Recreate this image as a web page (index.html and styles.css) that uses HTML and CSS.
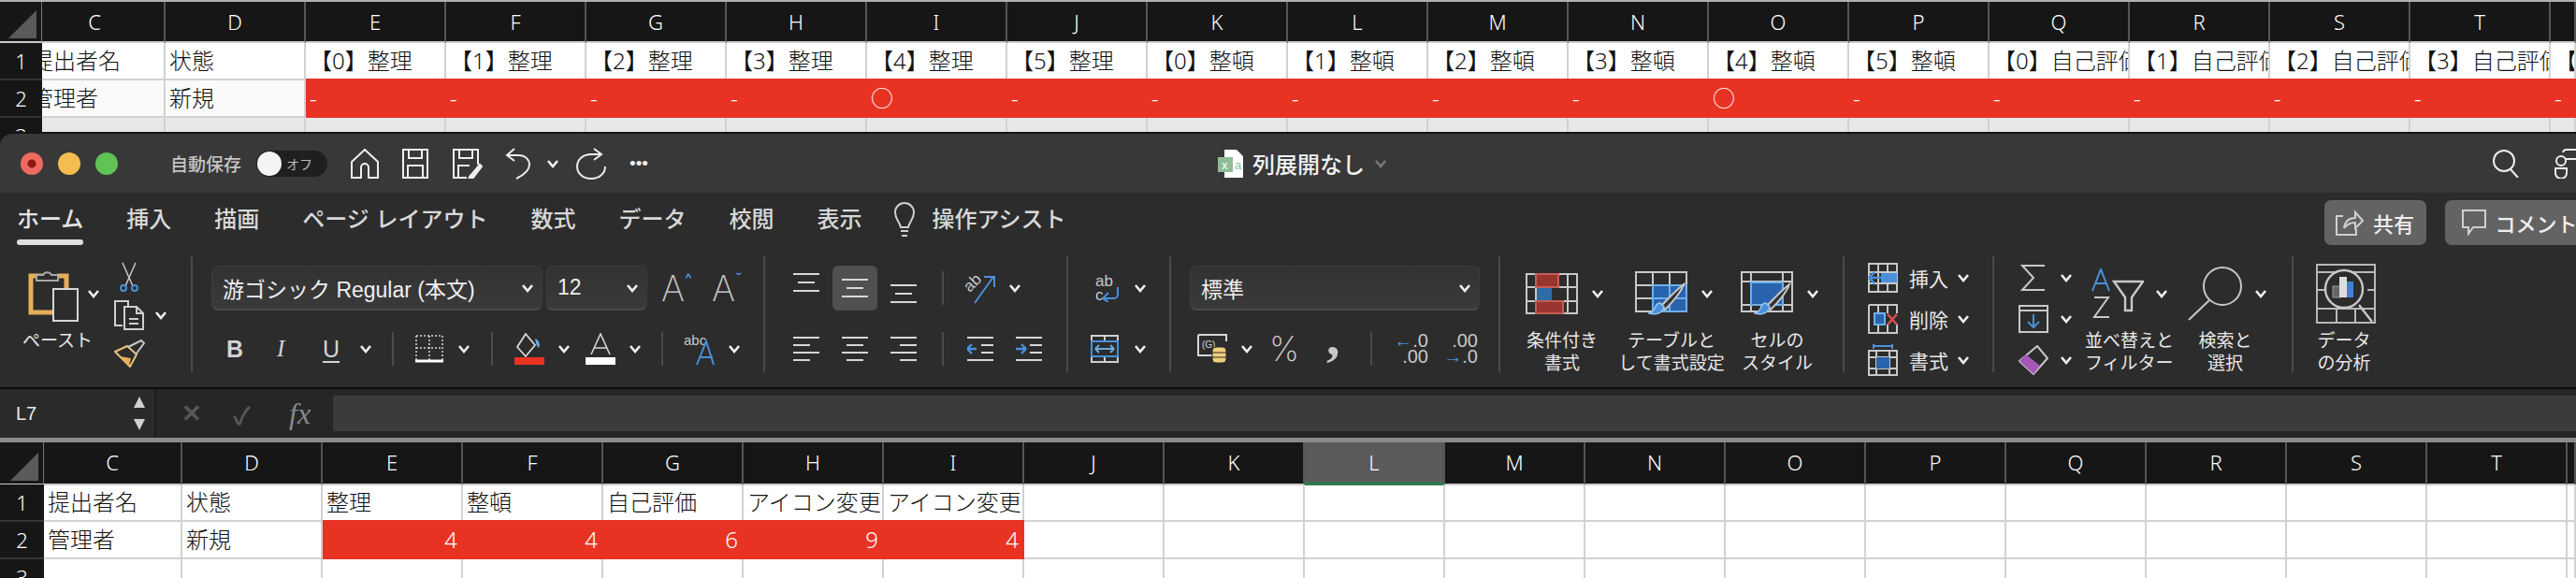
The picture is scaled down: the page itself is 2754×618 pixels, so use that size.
FILE: index.html
```html
<!DOCTYPE html>
<html lang="ja">
<head>
    <meta charset="UTF-8">
    <title>列展開なし</title>
    <link rel="stylesheet" href="styles.css">
</head>

<body>

	<svg class="sprite" width="0" height="0">
		<symbol id="chev" viewBox="0 0 14 10"><path d="M2 2l5 6 5-6" fill="none" stroke="#f0f0f0" stroke-width="2.6"/></symbol>
		<symbol id="al-top" viewBox="0 0 28 20"><path d="M0 1h28M5 10h18M0 19h28" stroke="#d6d6d6" stroke-width="2" fill="none"/></symbol>
		<symbol id="al-left" viewBox="0 0 28 26"><path d="M0 1h28M0 9h18M0 17h28M0 25h18" stroke="#d6d6d6" stroke-width="2" fill="none"/></symbol>
		<symbol id="al-center" viewBox="0 0 28 26"><path d="M0 1h28M5 9h18M0 17h28M5 25h18" stroke="#d6d6d6" stroke-width="2" fill="none"/></symbol>
		<symbol id="al-right" viewBox="0 0 28 26"><path d="M0 1h28M10 9h18M0 17h28M10 25h18" stroke="#d6d6d6" stroke-width="2" fill="none"/></symbol>
		<symbol id="brush" viewBox="0 0 40 36"><path d="M38 2C30 8 20 19 14 25l4 4C25 22 35 11 38 2z" fill="#333" stroke="#c8c8c8" stroke-width="2"/><path d="M13 22c-4 0-5 3-6 6-1 2-3 4-6 5 7 2 15 0 16-7z" fill="#4a90d9" stroke="#9cc7f0" stroke-width="1.5"/></symbol>
	</svg>

	<div class="sheet sheet-top">
		<div class="row head-row">
			<div class="corner"><span class="corner-tri"></span></div>
			<div class="col-head col-clip">C</div><div class="col-head">D</div><div class="col-head">E</div><div class="col-head">F</div><div class="col-head">G</div><div class="col-head">H</div><div class="col-head">I</div><div class="col-head">J</div><div class="col-head">K</div><div class="col-head">L</div><div class="col-head">M</div><div class="col-head">N</div><div class="col-head">O</div><div class="col-head">P</div><div class="col-head">Q</div><div class="col-head">R</div><div class="col-head">S</div><div class="col-head">T</div><div class="col-head"></div>
		</div>
		<div class="row">
			<div class="row-head">1</div>
			<div class="cell cell-clip">提出者名</div><div class="cell">状態</div>
			<div class="cell">【0】整理</div><div class="cell">【1】整理</div><div class="cell">【2】整理</div><div class="cell">【3】整理</div><div class="cell">【4】整理</div><div class="cell">【5】整理</div>
			<div class="cell">【0】整頓</div><div class="cell">【1】整頓</div><div class="cell">【2】整頓</div><div class="cell">【3】整頓</div><div class="cell">【4】整頓</div><div class="cell">【5】整頓</div>
			<div class="cell">【0】自己評価</div><div class="cell">【1】自己評価</div><div class="cell">【2】自己評価</div><div class="cell">【3】自己評価</div><div class="cell">【</div>
		</div>
		<div class="row row-soft">
			<div class="row-head">2</div>
			<div class="cell cell-clip">管理者</div><div class="cell">新規</div>
			<div class="cell red">-</div><div class="cell red">-</div><div class="cell red">-</div><div class="cell red">-</div><div class="cell red">○</div><div class="cell red">-</div>
			<div class="cell red">-</div><div class="cell red">-</div><div class="cell red">-</div><div class="cell red">-</div><div class="cell red">○</div><div class="cell red">-</div>
			<div class="cell red">-</div><div class="cell red">-</div><div class="cell red">-</div><div class="cell red">-</div><div class="cell red">-</div>
		</div>
		<div class="row row-shade">
			<div class="row-head">3</div>
			<div class="cell"></div><div class="cell"></div><div class="cell"></div><div class="cell"></div><div class="cell"></div><div class="cell"></div><div class="cell"></div><div class="cell"></div><div class="cell"></div><div class="cell"></div><div class="cell"></div><div class="cell"></div><div class="cell"></div><div class="cell"></div><div class="cell"></div><div class="cell"></div><div class="cell"></div><div class="cell"></div><div class="cell"></div>
		</div>
	</div>

	<div class="window">
		<!-- title bar -->
		<div class="titlebar">
			<div class="lights"><span class="light l-red"></span><span class="light l-yellow"></span><span class="light l-green"></span></div>
			<span class="autosave">自動保存</span>
			<div class="toggle"><span class="knob"></span><span class="toggle-text">オフ</span></div>
			<svg width="30" height="32" viewBox="0 0 30 32" class="qa"><path d="M1 14L15 1l14 13v17H19V20a4 4 0 0 0-8 0v11H1z"/></svg>
			<svg width="28" height="32" viewBox="0 0 28 32" class="qa"><path d="M1 1h26v30H1zM7 1v9h14V1M6 31V18h16v13"/></svg>
			<svg width="32" height="32" viewBox="0 0 32 32" class="qa"><path d="M15 31H1V1h26v16M7 1v9h14V1M6 30V18h12"/><path d="M18 30l11-13 2 2-10 13-4 1z" fill="#eee"/></svg>
			<svg width="28" height="34" viewBox="0 0 28 34" class="qa"><path d="M10 1L2 8l8 6M2 8h12c8 0 12 5 12 10 0 6-6 11-14 15"/></svg>
			<svg class="chev" width="14" height="10"><use href="#chev"/></svg>
			<svg width="32" height="34" viewBox="0 0 32 34" class="qa"><path d="M19 1l8 6-8 6M27 7H16C8 7 1 12 1 20s7 13 15 13 15-5 15-13"/></svg>
			<span class="dots">•••</span>
			<svg width="28" height="32" viewBox="0 0 28 32"><path d="M7 1h13l7 7v23H7z" fill="#fff"/><rect y="9" width="16" height="16" fill="#8fbc94"/><text x="4" y="22" class="doc-x">x</text><text x="18" y="22" class="doc-a">a</text></svg>
			<span class="doc-title">列展開なし</span>
			<svg class="chev chev-dim" width="14" height="10"><use href="#chev"/></svg>
			<svg width="28" height="30" viewBox="0 0 28 30" class="qa"><circle cx="12" cy="12" r="11"/><path d="M19 21l8 9"/></svg>
			<svg width="30" height="32" viewBox="0 0 30 32" class="qa"><circle cx="7" cy="13" r="5"/><path d="M1 21h12v5a6 6 0 0 1-12 0zM9 4a4 4 0 0 1 4-3h14v10H14l-2 0"/></svg>
		</div>

		<div class="ribbon">
			<div class="tabs">
				<div class="tab tab-active">ホーム</div>
				<div class="tab">挿入</div>
				<div class="tab">描画</div>
				<div class="tab">ページ レイアウト</div>
				<div class="tab">数式</div>
				<div class="tab">データ</div>
				<div class="tab">校閲</div>
				<div class="tab">表示</div>
				<div class="tab tab-assist">
					<svg width="22" height="38" viewBox="0 0 22 38" class="line-icon"><path d="M7 27C6 21 1 19 1 11a10 10 0 0 1 20 0c0 8-5 10-6 16zM7 31h8M8 36h6"/></svg>
					<span>操作アシスト</span>
				</div>
				<button class="share"><svg width="30" height="28" viewBox="0 0 30 28" class="line-icon"><path d="M8 7H1v20h21v-6M9 20c1-7 5-11 12-11V3l8 9-8 8v-6c-5 0-9 2-12 6z"/></svg>共有</button>
				<button class="share comment"><svg width="26" height="28" viewBox="0 0 26 28" class="line-icon"><path d="M1 1h24v18H12l-5 7v-7H1z"/></svg>コメント</button>
			</div>

			<div class="groups">
				<!-- clipboard -->
				<div class="group g-paste">
					<div class="big paste-big">
						<div class="big-icon">
							<svg width="54" height="60" viewBox="0 0 54 60"><path d="M22 11H3v39h23M31 11h10v14" fill="none" stroke="#e6ad5a" stroke-width="5"/><path d="M9 16v-6h7a5 5 0 0 1 9 0h7v6z" fill="#2c2c2c" stroke="#a8a8a8" stroke-width="2"/><rect x="27" y="25" width="26" height="34" fill="#2c2c2c" stroke="#d6d6d6" stroke-width="2"/></svg>
							<svg class="chev" width="14" height="10"><use href="#chev"/></svg>
						</div>
						<div class="big-label">ペースト</div>
					</div>
					<div class="clip-tools">
						<div class="clip-row"><svg class="scissors" width="20" height="32" viewBox="0 0 20 32"><path d="M3 1l11 25M17 1L6 26" stroke="#c8c8c8" stroke-width="1.5" fill="none"/><circle cx="4" cy="28" r="3" fill="none" stroke="#4a90d9" stroke-width="2"/><circle cx="16" cy="28" r="3" fill="none" stroke="#4a90d9" stroke-width="2"/></svg></div>
						<div class="clip-row">
							<svg width="32" height="32" viewBox="0 0 32 32" class="line-icon"><path d="M9 27H1V1h14v5M11 7h13l7 7v17H11zM24 7v7h7M16 20h10M16 25h10"/></svg>
							<svg class="chev" width="14" height="10"><use href="#chev"/></svg>
						</div>
						<div class="clip-row"><svg width="33" height="30" viewBox="0 0 33 30"><path d="M1 13l13-6 10 9-7 13z" fill="#2c2c2c" stroke="#e6c27a" stroke-width="2"/><path d="M6 18l12 2-2 8z" fill="#e6ad5a"/><path d="M15 8l14-7 3 3-9 12" fill="none" stroke="#c8c8c8" stroke-width="2"/></svg></div>
					</div>
				</div>

				<!-- font -->
				<div class="group g-font">
					<div class="tool-row font-top">
						<div class="combo combo-font"><span>游ゴシック Regular (本文)</span><svg class="chev" width="14" height="10"><use href="#chev"/></svg></div>
						<div class="combo combo-size"><span>12</span><svg class="chev" width="14" height="10"><use href="#chev"/></svg></div>
						<span class="big-a">A<i class="caret">^</i></span>
						<span class="big-a">A<i class="caret">ˇ</i></span>
					</div>
					<div class="tool-row font-bottom">
						<span class="fmt fmt-b">B</span>
						<span class="fmt fmt-i">I</span>
						<span class="fmt fmt-u">U</span>
						<svg class="chev" width="14" height="10"><use href="#chev"/></svg>
						<span class="vline"></span>
						<svg width="30" height="30" viewBox="0 0 30 30"><path d="M1 1h28M1 1v26M29 1v26M15 1v26M1 14h28" fill="none" stroke="#d6d6d6" stroke-width="1.5" stroke-dasharray="2 2"/><path d="M0 28h30" stroke="#fff" stroke-width="3"/></svg>
						<svg class="chev" width="14" height="10"><use href="#chev"/></svg>
						<span class="vline"></span>
						<svg width="32" height="34" viewBox="0 0 32 34"><path d="M12 1l-9 14 9 10 10-12z" fill="none" stroke="#d6d6d6" stroke-width="1.8"/><path d="M22 6c4 1 6 6 4 10-3-3-3-6-4-10z" fill="#6aa9e0"/><rect y="26" width="32" height="8" fill="#e93323"/></svg>
						<svg class="chev" width="14" height="10"><use href="#chev"/></svg>
						<svg width="32" height="34" viewBox="0 0 32 34"><path d="M6 23L16 1l10 22M9 16h14" fill="none" stroke="#d6d6d6" stroke-width="1.6"/><rect y="26" width="32" height="8" fill="#fff"/></svg>
						<svg class="chev" width="14" height="10"><use href="#chev"/></svg>
						<span class="vline"></span>
						<svg width="36" height="36" viewBox="0 0 36 36"><text x="0" y="14" class="svg-small">abc</text><path d="M14 35L24 10l8 25M18 27h13" fill="none" stroke="#4a90d9" stroke-width="2"/></svg>
						<svg class="chev" width="14" height="10"><use href="#chev"/></svg>
					</div>
				</div>

				<!-- alignment -->
				<div class="group g-align">
					<div class="tool-row align-top">
						<svg class="al-up" width="28" height="20"><use href="#al-top"/></svg>
						<div class="selected"><svg width="28" height="20"><use href="#al-top"/></svg></div>
						<svg class="al-down" width="28" height="20"><use href="#al-top"/></svg>
						<span class="vline"></span>
						<svg width="34" height="34" viewBox="0 0 34 34"><text x="0" y="16" transform="rotate(-45 10 12)" class="svg-ab">ab</text><path d="M11 33L31 5M21 5h11v11" fill="none" stroke="#4a90d9" stroke-width="2"/></svg>
						<svg class="chev" width="14" height="10"><use href="#chev"/></svg>
					</div>
					<div class="tool-row align-bottom">
						<svg width="28" height="26"><use href="#al-left"/></svg>
						<svg width="28" height="26"><use href="#al-center"/></svg>
						<svg width="28" height="26"><use href="#al-right"/></svg>
						<span class="vline"></span>
						<svg width="28" height="26" viewBox="0 0 28 26"><path d="M0 1h28M15 9h13M15 17h13M0 25h28" stroke="#d6d6d6" stroke-width="2"/><path d="M0 13h10M0 13l5-5M0 13l5 5" stroke="#4a90d9" stroke-width="2.4" fill="none"/></svg>
						<svg width="28" height="26" viewBox="0 0 28 26"><path d="M0 1h28M15 9h13M15 17h13M0 25h28" stroke="#d6d6d6" stroke-width="2"/><path d="M0 13h10M11 13l-5-5M11 13l-5 5" stroke="#4a90d9" stroke-width="2.4" fill="none"/></svg>
					</div>
				</div>

				<!-- wrap -->
				<div class="group g-wrap">
					<div class="tool-row wrap-top">
						<svg width="30" height="30" viewBox="0 0 30 30"><text x="0" y="13" class="svg-ab">ab</text><text x="0" y="28" class="svg-ab">c</text><path d="M24 14v8a4 4 0 0 1-4 4H9M14 20l-6 6 6 4" fill="none" stroke="#4a90d9" stroke-width="2"/></svg>
						<svg class="chev" width="14" height="10"><use href="#chev"/></svg>
					</div>
					<div class="tool-row wrap-bottom">
						<svg width="30" height="30" viewBox="0 0 30 30"><path d="M1 1h28v28H1zM15 1v7M15 22v7" fill="none" stroke="#cfcfcf" stroke-width="2"/><path d="M0 7h30M0 23h30M1 7v16M29 7v16" stroke="#4a90d9" stroke-width="2"/><path d="M5 15h20M5 15l4-4M5 15l4 4M25 15l-4-4M25 15l-4 4" stroke="#6aa9e0" stroke-width="2" fill="none"/></svg>
						<svg class="chev" width="14" height="10"><use href="#chev"/></svg>
					</div>
				</div>

				<!-- number -->
				<div class="group g-number">
					<div class="tool-row number-top">
						<div class="combo combo-format"><span>標準</span><svg class="chev" width="14" height="10"><use href="#chev"/></svg></div>
					</div>
					<div class="tool-row number-bottom">
						<svg width="32" height="32" viewBox="0 0 32 32"><path d="M1 1h30v7M1 1v22h15" fill="none" stroke="#d6d6d6" stroke-width="2"/><text x="5" y="15" class="svg-tiny">(G)</text><rect x="16" y="14" width="15" height="17" rx="4" fill="#f0cf7c" stroke="#2c2c2c"/><path d="M16 20h15M16 25h15" stroke="#2c2c2c"/></svg>
						<svg class="chev" width="14" height="10"><use href="#chev"/></svg>
						<span class="percent">%</span>
						<span class="comma">,</span>
						<span class="vline"></span>
						<div class="dec"><span><b class="blue">←</b>.0</span><span>.00</span></div>
						<div class="dec"><span>.00</span><span><b class="blue">→</b>.0</span></div>
					</div>
				</div>

				<!-- styles -->
				<div class="group g-styles">
					<div class="big">
						<div class="big-icon">
							<svg width="56" height="44" viewBox="0 0 56 44"><path d="M1 1h54v42H1zM11 1v42M45 1v42M1 15h54M1 30h54" fill="none" stroke="#c8c8c8" stroke-width="2"/><rect x="11" y="1" width="24" height="14" fill="#98352f" stroke="#c85c54" stroke-width="2"/><rect x="11" y="30" width="29" height="13" fill="#98352f" stroke="#c85c54" stroke-width="2"/><rect x="12" y="16" width="16" height="13" fill="#2e6ca8"/></svg>
							<svg class="chev" width="14" height="10"><use href="#chev"/></svg>
						</div>
						<div class="big-label">条件付き<br>書式</div>
					</div>
					<div class="big big-2">
						<div class="big-icon">
							<svg width="56" height="48" viewBox="0 0 56 48"><path d="M1 1h54v42H1zM19 1v42M37 1v42M1 15h54M1 29h54" fill="none" stroke="#c8c8c8" stroke-width="2"/><path d="M19 15h36v28H19z" fill="#2a63ad" stroke="#6fb0ea" stroke-width="2"/><path d="M37 15v28M19 29h36" stroke="#6fb0ea" stroke-width="2"/><use href="#brush" x="14" y="12" width="40" height="36"/></svg>
							<svg class="chev" width="14" height="10"><use href="#chev"/></svg>
						</div>
						<div class="big-label">テーブルと<br>して書式設定</div>
					</div>
					<div class="big big-3">
						<div class="big-icon">
							<svg width="56" height="48" viewBox="0 0 56 48"><path d="M1 1h54v42H1zM11 1v42M1 11h54M1 36h54M45 1v42" fill="none" stroke="#c8c8c8" stroke-width="2"/><rect x="11" y="12" width="34" height="24" fill="#2a63ad" stroke="#6fb0ea" stroke-width="2"/><use href="#brush" x="14" y="12" width="40" height="36"/></svg>
							<svg class="chev" width="14" height="10"><use href="#chev"/></svg>
						</div>
						<div class="big-label">セルの<br>スタイル</div>
					</div>
				</div>

				<!-- cells -->
				<div class="group g-cells">
					<div class="cells-row">
						<svg width="32" height="32" viewBox="0 0 32 32"><path d="M1 1h30v30H1zM11 1v30M21 1v30M1 10h30M1 22h30" fill="none" stroke="#c8c8c8" stroke-width="2"/><rect x="14" y="11" width="17" height="10" fill="#4a90d9"/><path d="M1 16h14M1 16l6-6M1 16l6 6" stroke="#4a90d9" stroke-width="2.5" fill="none"/></svg>
						<span>挿入</span>
						<svg class="chev" width="14" height="10"><use href="#chev"/></svg>
					</div>
					<div class="cells-row">
						<svg width="32" height="32" viewBox="0 0 32 32"><path d="M1 1h30v9M1 1v30h30v-9M11 1v9M21 1v9M11 22v9M21 22v9" fill="none" stroke="#c8c8c8" stroke-width="2"/><rect x="7" y="10" width="11" height="12" fill="#2a63ad" stroke="#6fb0ea" stroke-width="2"/><path d="M21 11l10 11M31 11L21 22" stroke="#d8524c" stroke-width="2.5"/></svg>
						<span>削除</span>
						<svg class="chev" width="14" height="10"><use href="#chev"/></svg>
					</div>
					<div class="cells-row">
						<svg width="32" height="34" viewBox="0 0 32 34"><path d="M7 2h18M6 0v5M26 0v5" stroke="#4a90d9" stroke-width="2"/><path d="M1 7h30v26H1zM9 7v26M23 7v26M1 14h30M1 26h30" fill="none" stroke="#c8c8c8" stroke-width="2"/><rect x="9" y="14" width="14" height="12" fill="#2a63ad"/></svg>
						<span>書式</span>
						<svg class="chev" width="14" height="10"><use href="#chev"/></svg>
					</div>
				</div>

				<!-- editing -->
				<div class="group g-edit">
					<div class="edit-col">
						<div class="edit-row">
							<svg width="32" height="30" viewBox="0 0 32 30"><path d="M28 2H4l12 13L4 28h24" fill="none" stroke="#c8c8c8" stroke-width="2"/></svg>
							<svg class="chev" width="14" height="10"><use href="#chev"/></svg>
						</div>
						<div class="edit-row">
							<svg width="32" height="30" viewBox="0 0 32 30"><path d="M1 1h30v28H1zM1 6h30" fill="none" stroke="#c8c8c8" stroke-width="2"/><path d="M16 10v14M10 18l6 6 6-6" fill="none" stroke="#4a90d9" stroke-width="2"/></svg>
							<svg class="chev" width="14" height="10"><use href="#chev"/></svg>
						</div>
						<div class="edit-row">
							<svg width="32" height="32" viewBox="0 0 32 32"><path d="M20 1l11 13-15 17L1 17z" fill="none" stroke="#c8c8c8" stroke-width="2"/><path d="M8 10l15 12-7 9L1 17z" fill="#a657b8"/></svg>
							<svg class="chev" width="14" height="10"><use href="#chev"/></svg>
						</div>
					</div>
					<div class="big big-sort">
						<div class="big-icon">
							<svg width="56" height="54" viewBox="0 0 56 54"><path d="M1 24L10 1l9 23M4 16h12" fill="none" stroke="#4a90d9" stroke-width="2"/><path d="M3 31h15L3 52h16" fill="none" stroke="#c8c8c8" stroke-width="2"/><path d="M24 14h31L43 31v14h-7V31z" fill="none" stroke="#c8c8c8" stroke-width="2.4"/></svg>
							<svg class="chev" width="14" height="10"><use href="#chev"/></svg>
						</div>
						<div class="big-label">並べ替えと<br>フィルター</div>
					</div>
					<div class="big big-find">
						<div class="big-icon">
							<svg width="58" height="58" viewBox="0 0 58 58"><circle cx="37" cy="21" r="20" fill="none" stroke="#c8c8c8" stroke-width="2"/><path d="M23 36L1 57" stroke="#c8c8c8" stroke-width="2"/></svg>
							<svg class="chev" width="14" height="10"><use href="#chev"/></svg>
						</div>
						<div class="big-label">検索と<br>選択</div>
					</div>
				</div>

				<!-- analysis -->
				<div class="group g-data">
					<div class="big big-data">
						<div class="big-icon">
							<svg width="64" height="64" viewBox="0 0 64 64"><path d="M1 1h62v62H1zM1 9h62M1 48h62M22 48v15M42 48v15M1 28h8M55 28h8" fill="none" stroke="#b8b8b8" stroke-width="2"/><path d="M60 62L46 44" stroke="#c8c8c8" stroke-width="2.4"/><circle cx="30" cy="27" r="20" fill="#2c2c2c" stroke="#c8c8c8" stroke-width="2.4"/><rect x="18" y="24" width="8" height="12" fill="#666" stroke="#999"/><rect x="25" y="14" width="8" height="22" fill="#ddd"/><rect x="33" y="19" width="7" height="17" fill="#3d82d6"/></svg>
						</div>
						<div class="big-label">データ<br>の分析</div>
					</div>
				</div>
			</div>
		</div>

		<!-- formula bar -->
		<div class="formula">
			<div class="namebox">
				<span>L7</span>
				<div class="spin"><i class="spin-up"></i><i class="spin-down"></i></div>
			</div>
			<div class="formula-tools">
				<span class="f-x">✕</span>
				<span class="f-ok">✓</span>
				<span class="f-fx">fx</span>
			</div>
			<div class="formula-input"></div>
		</div>
	</div>

	<div class="sheet sheet-bottom">
		<div class="row head-row">
			<div class="corner"><span class="corner-tri"></span></div>
			<div class="col-head">C</div><div class="col-head">D</div><div class="col-head">E</div><div class="col-head">F</div><div class="col-head">G</div><div class="col-head">H</div><div class="col-head">I</div><div class="col-head">J</div><div class="col-head">K</div><div class="col-head col-sel">L</div><div class="col-head">M</div><div class="col-head">N</div><div class="col-head">O</div><div class="col-head">P</div><div class="col-head">Q</div><div class="col-head">R</div><div class="col-head">S</div><div class="col-head">T</div><div class="col-head"></div>
		</div>
		<div class="row">
			<div class="row-head">1</div>
			<div class="cell">提出者名</div><div class="cell">状態</div><div class="cell">整理</div><div class="cell">整頓</div><div class="cell">自己評価</div><div class="cell">アイコン変更</div><div class="cell">アイコン変更</div>
			<div class="cell"></div><div class="cell"></div><div class="cell"></div><div class="cell"></div><div class="cell"></div><div class="cell"></div><div class="cell"></div><div class="cell"></div><div class="cell"></div><div class="cell"></div><div class="cell"></div><div class="cell"></div>
		</div>
		<div class="row">
			<div class="row-head">2</div>
			<div class="cell">管理者</div><div class="cell">新規</div>
			<div class="cell red num">4</div><div class="cell red num">4</div><div class="cell red num">6</div><div class="cell red num">9</div><div class="cell red num">4</div>
			<div class="cell"></div><div class="cell"></div><div class="cell"></div><div class="cell"></div><div class="cell"></div><div class="cell"></div><div class="cell"></div><div class="cell"></div><div class="cell"></div><div class="cell"></div><div class="cell"></div><div class="cell"></div>
		</div>
		<div class="row">
			<div class="row-head">3</div>
			<div class="cell"></div><div class="cell"></div><div class="cell"></div><div class="cell"></div><div class="cell"></div><div class="cell"></div><div class="cell"></div><div class="cell"></div><div class="cell"></div><div class="cell"></div><div class="cell"></div><div class="cell"></div><div class="cell"></div><div class="cell"></div><div class="cell"></div><div class="cell"></div><div class="cell"></div><div class="cell"></div><div class="cell"></div>
		</div>
	</div>

</body>

</html>
```

FILE: styles.css
```css
*{
	margin: 0;
	padding: 0;
	box-sizing: border-box;
}

html, body{
	width: 2754px;
	height: 618px;
	overflow: hidden;
	background: #2c2c2c;
}

body{
	font-family: 'Liberation Sans', 'Noto Sans CJK JP', sans-serif;
}

.sprite{
	position: absolute;
}

svg{
	display: block;
	flex: none;
}

/* sheets */
.sheet{
	background: #fff;
	overflow: hidden;
	font-family: 'Noto Sans', 'Noto Sans CJK JP', sans-serif;
}

.sheet-top{
	height: 160px;
	border-top: 2px solid #b0b0b0;
}

.sheet-bottom{
	height: 150px;
	border-top: 5px solid;
	border-image: linear-gradient(#8a8a8a, #fff 50%, #bdbdbd) 1;
}

.row{
	display: grid;
	height: 40px;
}

.head-row{
	height: 44px;
}

.sheet-bottom .head-row{
	height: 45px;
}

.sheet-top .row{
	grid-template-columns: 45px 132px repeat(17, 150px) 27px;
}

.sheet-bottom .row{
	grid-template-columns: 47px 148px repeat(17, 150px) 9px;
}

.corner{
	background: #161616;
	border-right: 1px solid #777;
	border-bottom: 2px solid #ccc;
	display: flex;
	align-items: flex-end;
	justify-content: flex-end;
	padding: 0 5px 3px 0;
}

.corner-tri{
	width: 30px;
	height: 30px;
	background: #5a5a5a;
	clip-path: polygon(100% 0, 100% 100%, 0 100%);
}

.col-head{
	background: #161616;
	color: #fff;
	font-size: 22px;
	font-weight: 300;
	line-height: 42px;
	text-align: center;
	border-right: 2px solid #555;
	border-bottom: 2px solid #ccc;
}

.col-clip{
	padding-right: 18px;
}

.col-sel{
	background: #5a5a5a;
	border-bottom: 4px solid #2f7a4f;
}

.row-head{
	background: #161616;
	color: #fff;
	font-size: 22px;
	font-weight: 300;
	line-height: 38px;
	text-align: center;
	border-bottom: 2px solid #333;
}

.cell{
	font-size: 24px;
	font-weight: 300;
	line-height: 38px;
	color: #111;
	padding-left: 4px;
	white-space: nowrap;
	overflow: hidden;
	border-right: 2px solid #d2d2d2;
	border-bottom: 2px solid #d2d2d2;
}

.cell-clip{
	text-indent: -16px;
}

.row-soft .cell{
	background: #fafafa;
}

.row-shade .cell{
	background: #e8e8e8;
}

.sheet .row .cell.red{
	background: #e83323;
	color: #fff;
	border-color: #e83323;
	box-shadow: 0 -2px 0 #e83323;
	overflow: visible;
}

.sheet .row .num{
	text-align: right;
	padding-right: 4px;
}

/* excel window */
.window{
	position: relative;
	margin-top: -19px;
	height: 327px;
	border-top: 2px solid #141414;
	border-radius: 14px 0 0 0;
	background: #2c2c2c;
	overflow: hidden;
	color: #e8e8e8;
}

.titlebar{
	height: 63px;
	background: #383838;
	padding-left: 22px;
	display: grid;
	grid-template-columns: 160px 92px 101px 55px 54px 56px 44px 32px 57px 629px 37px 130px 1196px 66px 30px;
	align-items: center;
	justify-items: start;
}

.lights{
	display: flex;
	gap: 16px;
}

.light{
	width: 24px;
	height: 24px;
	border-radius: 50%;
}

.l-red{
	background: radial-gradient(circle, #8e1a14 0 4px, #ef6a5e 5px);
}

.l-yellow{
	background: #f5bd4f;
}

.l-green{
	background: #5fc454;
}

.autosave{
	font-size: 19px;
	font-weight: 500;
	color: #c4c4c4;
	white-space: nowrap;
}

.toggle{
	width: 76px;
	height: 28px;
	border-radius: 14px;
	background: #1f1f1f;
	display: flex;
	align-items: center;
	gap: 5px;
}

.knob{
	width: 26px;
	height: 26px;
	border-radius: 50%;
	background: #f4f4f4;
	margin-left: 1px;
}

.toggle-text{
	font-size: 14px;
	color: #bdbdbd;
}

.qa path, .qa circle{
	fill: none;
	stroke: #eee;
	stroke-width: 2;
}

.qa path[fill]{
	fill: #eee;
}

.dots{
	font-size: 19px;
	letter-spacing: 0;
	color: #eee;
}

.doc-x, .doc-a{
	font-size: 13px;
	fill: #fff;
}

.doc-a{
	fill: #8fbc94;
}

.doc-title{
	font-size: 24px;
	font-weight: 500;
	color: #f0f0f0;
	white-space: nowrap;
}

.chev-dim{
	opacity: .35;
}

.ribbon{
	height: 208px;
	background: #2c2c2c;
}

.tabs{
	height: 68px;
	padding-left: 18px;
	display: flex;
	gap: 46px;
	align-items: flex-start;
}

.tab{
	font-size: 24px;
	font-weight: 500;
	line-height: 42px;
	padding-top: 8px;
	color: #d8d8d8;
	white-space: nowrap;
	flex: none;
}

.tab-active{
	color: #e4e4e4;
}

.tab-active::after{
	content: "";
	display: block;
	height: 6px;
	border-radius: 3px;
	background: #dedede;
}

.tab-assist{
	display: flex;
	align-items: center;
	gap: 18px;
	margin-left: -11px;
}

.line-icon path{
	fill: none;
	stroke: #cfcfcf;
	stroke-width: 2;
}

.share{
	flex: none;
	height: 48px;
	width: 109px;
	margin: 8px 0 0 1299px;
	background: #636363;
	border: none;
	border-radius: 7px;
	color: #efefef;
	font: 500 22px 'Liberation Sans', 'Noto Sans CJK JP', sans-serif;
	display: flex;
	align-items: center;
	justify-content: center;
	gap: 10px;
}

.comment{
	width: 170px;
	margin-left: -26px;
	justify-content: flex-start;
	padding-left: 18px;
	white-space: nowrap;
}

.groups{
	display: flex;
	height: 124px;
}

.group{
	flex: none;
	border-right: 2px solid #4a4a4a;
}

.g-paste{
	width: 206px;
	padding-left: 16px;
	display: flex;
	gap: 15px;
}

.g-font{
	width: 612px;
	padding: 10px 0 0 20px;
}

.g-align{
	width: 324px;
	padding: 10px 0 0 30px;
}

.g-wrap{
	width: 110px;
	padding: 10px 0 0 24px;
}

.g-number{
	width: 352px;
	padding: 10px 0 0 20px;
}

.g-styles{
	width: 368px;
	padding-left: 9px;
	display: flex;
	gap: 3px;
}

.g-cells{
	width: 160px;
	padding: 1px 0 0 25px;
}

.g-edit{
	width: 320px;
	display: flex;
}

.g-data{
	width: 200px;
	border-right: none;
	padding-left: 16px;
}

/* one row of small tools, columns are the distance to the next tool */
.tool-row{
	display: grid;
	align-items: center;
	justify-items: start;
	height: 48px;
}

.font-bottom, .align-bottom, .wrap-bottom, .number-bottom{
	height: 38px;
	margin-top: 22px;
}

.font-top{
	grid-template-columns: 358px 123px 54px 40px;
}

.font-bottom{
	padding-left: 16px;
	grid-template-columns: 54px 49px 39px 35px 25px 45px 36px 25px 46px 30px 46px 35px 24px 47px 14px;
}

.align-top{
	grid-template-columns: 42px 62px 55px 24px 47px 14px;
}

.align-bottom{
	grid-template-columns: 52px 52px 55px 27px 52px 28px;
}

.al-up{
	align-self: start;
	margin-top: 8px;
}

.al-down{
	align-self: end;
	margin-bottom: 8px;
}

.selected{
	width: 48px;
	height: 48px;
	border-radius: 6px;
	background: #505050;
	display: flex;
	align-items: center;
	justify-content: center;
}

.wrap-top{
	padding-left: 5px;
	grid-template-columns: 41px 14px;
}

.wrap-bottom{
	grid-template-columns: 46px 14px;
}

.number-top{
	grid-template-columns: 310px;
}

.number-bottom{
	padding-left: 8px;
	grid-template-columns: 46px 31px 61px 47px 24px 53px 40px;
}

.vline{
	width: 2px;
	height: 36px;
	background: #4a4a4a;
}

.combo{
	height: 48px;
	border-radius: 7px;
	border: 1px solid #3c3c3c;
	border-bottom: 2px solid #4a4a4a;
	background: linear-gradient(#323232, #3a3a3a);
	display: flex;
	align-items: center;
	justify-content: space-between;
	padding: 0 8px 0 11px;
	font-size: 23px;
	color: #efefef;
	white-space: nowrap;
}

.combo-font{
	width: 354px;
}

.combo-size{
	width: 108px;
}

.combo-format{
	width: 310px;
}

.big-a{
	font-family: 'Inter', sans-serif;
	font-size: 38px;
	font-weight: 200;
	color: #c4c4c4;
	display: flex;
	align-items: flex-start;
	line-height: 40px;
}

.caret{
	font-size: 16px;
	line-height: 20px;
	font-style: normal;
	font-weight: 700;
	color: #4a90d9;
}

.fmt{
	font-size: 25px;
	color: #d4d4d4;
	line-height: 30px;
}

.fmt-b{
	font-weight: 700;
}

.fmt-i{
	font-style: italic;
	font-family: 'Liberation Serif', serif;
}

.fmt-u{
	text-decoration: underline;
	text-underline-offset: 4px;
}

.svg-small{
	font: 15px 'Liberation Sans', sans-serif;
	fill: #c8c8c8;
}

.svg-ab{
	font: 17px 'Liberation Sans', sans-serif;
	fill: #c8c8c8;
}

.svg-tiny{
	font: 10px 'Liberation Sans', sans-serif;
	fill: #d6d6d6;
}

.percent{
	font-family: 'Inter', sans-serif;
	font-size: 36px;
	font-weight: 200;
	color: #d0d0d0;
	line-height: 38px;
}

.comma{
	font-size: 58px;
	font-weight: 700;
	font-family: 'Liberation Serif', serif;
	color: #c8c8c8;
	line-height: 20px;
	margin-top: -26px;
}

.dec{
	display: flex;
	flex-direction: column;
	align-items: flex-end;
	font-size: 20px;
	line-height: 17px;
	color: #c8c8c8;
	width: 38px;
	white-space: nowrap;
}

.dec b{
	font-weight: 400;
}

.blue{
	color: #4a90d9;
}

/* big ribbon buttons, icon on top and a label below */
.big{
	width: 114px;
	flex: none;
}

.big-icon{
	height: 79px;
	padding-left: 18px;
	display: flex;
	align-items: center;
	gap: 14px;
}

.big-label{
	font-size: 19px;
	line-height: 24px;
	text-align: center;
	color: #e8e8e8;
	white-space: nowrap;
}

.big-3{
	margin-left: -4px;
}

.paste-big{
	width: 91px;
}

.paste-big .big-icon{
	padding-left: 14px;
	gap: 9px;
}

.clip-tools{
	display: flex;
	flex-direction: column;
}

.clip-row{
	height: 44px;
	display: flex;
	align-items: center;
	gap: 11px;
}

.clip-row:first-child, .edit-row:first-child{
	margin-top: 1px;
}

.scissors{
	margin-left: 6px;
}

.cells-row{
	height: 44px;
	display: flex;
	align-items: center;
	font-size: 21px;
	color: #e8e8e8;
}

.cells-row span{
	width: 51px;
	margin-left: 12px;
	white-space: nowrap;
}

.edit-col{
	width: 97px;
	padding-left: 26px;
}

.edit-row{
	height: 44px;
	display: flex;
	align-items: center;
	gap: 12px;
}

.big-sort{
	width: 94px;
}

.big-sort .big-icon{
	padding-left: 7px;
	gap: 12px;
}

.big-find{
	width: 112px;
}

.big-find .big-icon{
	padding-left: 16px;
	gap: 13px;
}

.big-data{
	width: 76px;
}

.big-data .big-icon{
	padding-left: 8px;
}

/* formula bar */
.formula{
	height: 54px;
	border-top: 2px solid #0c0c0c;
	background: #262626;
	display: flex;
	align-items: center;
}

.namebox{
	width: 167px;
	height: 100%;
	border-right: 2px solid #1c1c1c;
	background: #2a2a2a;
	padding-left: 17px;
	display: flex;
	align-items: center;
	justify-content: space-between;
	font-size: 20px;
	color: #e8e8e8;
}

.spin{
	display: flex;
	flex-direction: column;
	gap: 12px;
	margin-right: 10px;
}

.spin i{
	display: block;
	width: 0;
	height: 0;
	border-left: 6px solid transparent;
	border-right: 6px solid transparent;
}

.spin-up{
	border-bottom: 12px solid #d0d0d0;
}

.spin-down{
	border-top: 12px solid #d0d0d0;
}

.formula-tools{
	width: 189px;
	padding-left: 27px;
	display: flex;
	align-items: center;
	color: #585858;
	font-size: 26px;
}

.f-x{
	width: 55px;
	font-weight: 700;
}

.f-ok{
	width: 60px;
	font-weight: 700;
}

.f-fx{
	font-family: 'Liberation Serif', serif;
	font-style: italic;
	font-size: 32px;
	color: #8a8a8a;
}

.formula-input{
	flex: 1;
	height: 38px;
	background: #3b3b3b;
}
```
